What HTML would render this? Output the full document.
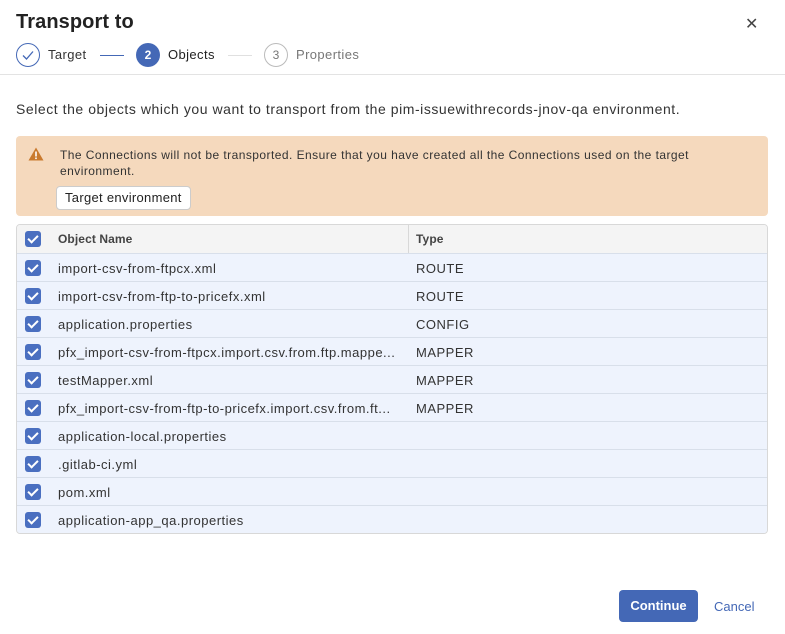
<!DOCTYPE html>
<html><head><meta charset="utf-8"><style>
*{box-sizing:border-box;margin:0;padding:0}
body{width:785px;height:634px;background:#fff;font-family:"Liberation Sans",sans-serif;color:#222;position:relative;overflow:hidden}
.abs{position:absolute}
h1{position:absolute;left:16px;top:11px;font-size:20px;font-weight:bold;color:#222;letter-spacing:0.1px}
.close{left:745px;top:14px;font-size:16px;color:#444}
.step{font-size:13px;top:47px;color:#333;letter-spacing:0.4px}
.circ{position:absolute;width:24px;height:24px;border-radius:50%;top:43px}
.sep{position:absolute;height:1px;top:55px}
.hr{left:0;top:74px;width:785px;height:1px;background:#e3e3e3}
.intro{left:16px;top:101px;font-size:14px;color:#333;letter-spacing:0.55px;white-space:nowrap}
.warn{left:16px;top:136px;width:752px;height:80px;background:#f5d9bd;border-radius:4px}
.warn p{position:absolute;left:44px;top:11px;font-size:12px;line-height:16px;color:#333;width:690px;letter-spacing:0.45px}
.btn{position:absolute;left:40px;top:50px;height:24px;padding:0 8px;background:#fff;border:1px solid #ccc;border-radius:4px;font-size:13px;line-height:22px;color:#222;letter-spacing:0.3px}
.tbl{left:16px;top:224px;width:752px;height:310px;border:1px solid #d8d8d8;border-radius:4px;overflow:hidden}
.row{position:absolute;left:0;width:750px;height:28px;background:#eef3fd;border-top:1px solid #d8dfea;font-size:13px;color:#333;letter-spacing:0.5px}
.row.h{background:#f4f4f4;border-top:none;font-weight:bold;color:#444;font-size:12px;letter-spacing:0.1px}
.cb{position:absolute;left:8px;top:6px;width:16px;height:16px;border-radius:3px;background:#4a6fc0}
.cb:after{content:"";position:absolute;left:5px;top:2px;width:4px;height:8px;border:solid #fff;border-width:0 2px 2px 0;transform:rotate(45deg)}
.n{position:absolute;left:41px;top:7px;white-space:nowrap}
.t{position:absolute;left:399px;top:7px}
.cont{left:619px;top:590px;width:79px;height:32px;background:#4468b6;border-radius:4px;color:#fff;font-size:13px;font-weight:bold;text-align:center;line-height:32px}
.cancel{left:714px;top:599px;font-size:13px;color:#4468b6}
</style></head><body>
<h1>Transport to</h1>
<div class="abs close">✕</div>
<div class="circ" style="left:16px;border:1px solid #4468b6"><svg width="22" height="22" viewBox="0 0 22 22"><path d="M6 11.5l3.5 3.5L16 7.5" fill="none" stroke="#4468b6" stroke-width="1.3"/></svg></div>
<div class="abs step" style="left:48px">Target</div>
<div class="sep" style="left:100px;width:24px;background:#4468b6"></div>
<div class="circ" style="left:136px;background:#4468b6;color:#fff;font-size:12px;font-weight:bold;text-align:center;line-height:24px">2</div>
<div class="abs step" style="left:168px;color:#222">Objects</div>
<div class="sep" style="left:228px;width:24px;background:#e0e0e0"></div>
<div class="circ" style="left:264px;border:1px solid #bbb;color:#777;font-size:12px;text-align:center;line-height:22px">3</div>
<div class="abs step" style="left:296px;color:#777">Properties</div>
<div class="abs hr"></div>
<div class="abs intro">Select the objects which you want to transport from the pim-issuewithrecords-jnov-qa environment.</div>
<div class="abs warn">
<svg class="abs" style="left:12px;top:11px" width="16" height="14" viewBox="0 0 16 14"><path d="M8 0.5L15.5 13.5H0.5Z" fill="#c97a2e"/><rect x="7.2" y="4.5" width="1.6" height="5" fill="#fff"/><rect x="7.2" y="10.5" width="1.6" height="1.6" fill="#fff"/></svg>
<p>The Connections will not be transported. Ensure that you have created all the Connections used on the target environment.</p>
<div class="btn">Target environment</div>
</div>
<div class="abs tbl">
<div class="row h" style="top:0"><div class="cb"></div><div class="n">Object Name</div><div style="position:absolute;left:391px;top:0;width:1px;height:28px;background:#d8d8d8"></div><div class="t">Type</div></div>
<div class="row" style="top:28px"><div class="cb"></div><div class="n">import-csv-from-ftpcx.xml</div><div class="t">ROUTE</div></div>
<div class="row" style="top:56px"><div class="cb"></div><div class="n">import-csv-from-ftp-to-pricefx.xml</div><div class="t">ROUTE</div></div>
<div class="row" style="top:84px"><div class="cb"></div><div class="n">application.properties</div><div class="t">CONFIG</div></div>
<div class="row" style="top:112px"><div class="cb"></div><div class="n">pfx_import-csv-from-ftpcx.import.csv.from.ftp.mappe...</div><div class="t">MAPPER</div></div>
<div class="row" style="top:140px"><div class="cb"></div><div class="n">testMapper.xml</div><div class="t">MAPPER</div></div>
<div class="row" style="top:168px"><div class="cb"></div><div class="n">pfx_import-csv-from-ftp-to-pricefx.import.csv.from.ft...</div><div class="t">MAPPER</div></div>
<div class="row" style="top:196px"><div class="cb"></div><div class="n">application-local.properties</div></div>
<div class="row" style="top:224px"><div class="cb"></div><div class="n">.gitlab-ci.yml</div></div>
<div class="row" style="top:252px"><div class="cb"></div><div class="n">pom.xml</div></div>
<div class="row" style="top:280px"><div class="cb"></div><div class="n">application-app_qa.properties</div></div>
</div>
<div class="abs cont">Continue</div>
<div class="abs cancel">Cancel</div>
</body></html>
